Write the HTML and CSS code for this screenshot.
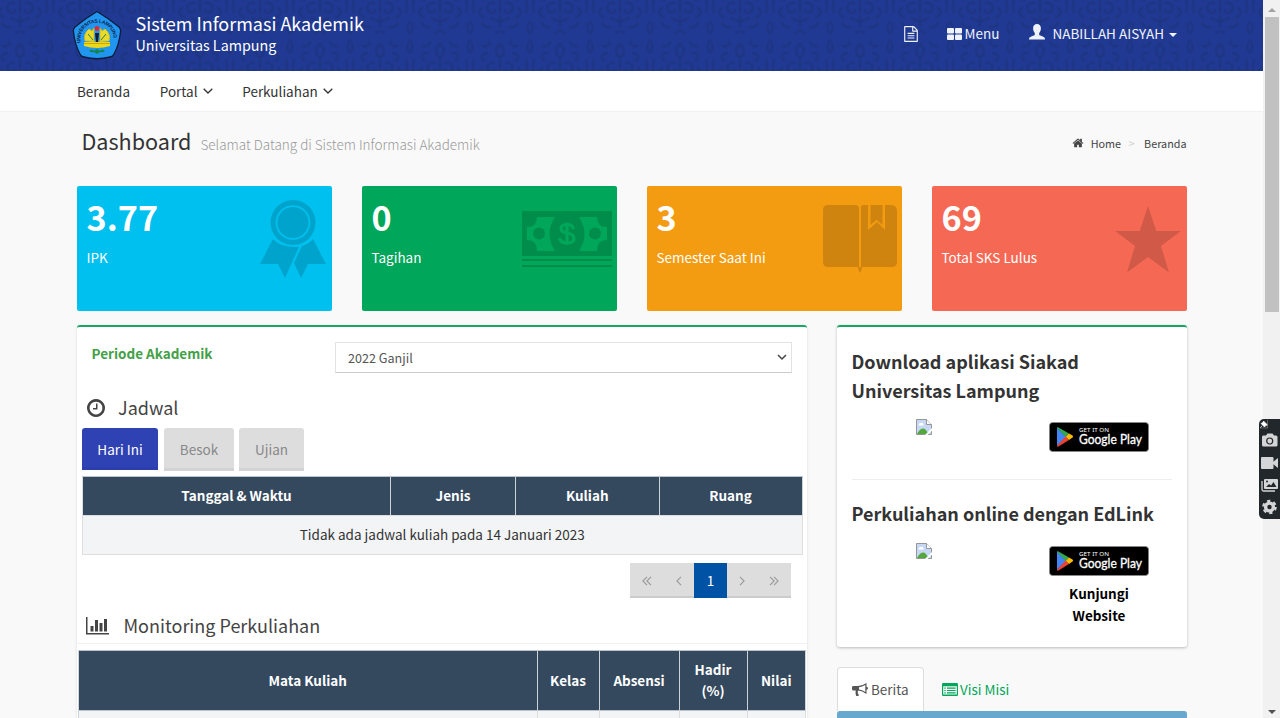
FILE: index.html
```html
<!DOCTYPE html>
<html lang="id">
<head>
<meta charset="utf-8">
<title>Sistem Informasi Akademik</title>
<link rel="stylesheet" href="styles.css">
</head>
<body>
<div class="page">
  <header class="topbar">
    <svg class="damask" width="1263" height="71" aria-hidden="true">
      <defs>
        <pattern id="damask" x="-10" y="-24" width="60" height="60" patternUnits="userSpaceOnUse">
          <g fill="none" stroke="#1c3178" stroke-width="3" stroke-linecap="round" opacity=".5">
            <path d="M30 22c-6-5-4-11 0-14c4 3 6 9 0 14M30 25v12M24 27c-5-1-8 3-6 7s7 3 7 0M36 27c5-1 8 3 6 7s-7 3-7 0M22 42q8 6 16 0M30 41v9"/>
            <path d="M17 17c-5 0-7 5-3 7M43 17c5 0 7 5 3 7M12 32c-4 3-3 8 2 9M48 32c4 3 3 8-2 9M20 51q-6 1-8-4M40 51q6 1 8-4M20 6q-2 5-7 4M40 6q2 5 7 4"/>
            <path d="M0 5q5 6 0 12M60 5q-5 6 0 12M0 46q6 5 0 11M60 46q-6 5 0 11M4 24q-2 6 0 12M56 24q2 6 0 12M26 57q4-4 8 0"/>
          </g>
        </pattern>
      </defs>
      <rect width="1263" height="71" fill="url(#damask)"/>
    </svg>
    <div class="brand">
      <svg class="emblem" width="50" height="50" viewBox="0 0 50 50">
        <defs><path id="arc" d="M8.500 33C5 6 45 6 41.500 33"/></defs>
        <path d="M25 1.500Q36 8 47 17Q49 19 48.500 22Q47 35 42 44Q41 46.500 38 47Q25 50.500 12 47Q9 46.500 8 44Q3 35 1.500 22Q1 19 3 17Q14 8 25 1.500Z" fill="#2196f0" stroke="#0c1c3c" stroke-width="1.300"/>
        <text class="emblem-text"><textPath href="#arc" textLength="55">UNIVERSITAS LAMPUNG</textPath></text>
        <path d="M12 32h26v4q-13 4-26 0Z" fill="#f0d818"/>
        <path d="M13 31Q11 24 17 19l3 2 2-3v14M37 31Q39 24 33 19l-3 2-2-3v14M14 31h22" fill="#eadb2a" stroke="#d2b91a" stroke-width=".8"/>
        <path d="M16 24l5 6M34 24l-5 6" stroke="#277c58"/>
        <path d="M12 33.500h26" stroke="#c9a714"/>
        <path d="M23 23h4l-1 9h-2Z" fill="#111b3d"/><circle cx="25" cy="18.500" r="2.400" fill="#e0283c"/>
        <path d="M17 41q3-3 5 0l3-2 3 2q2-3 5 0-3 2-5 1l-3 2-3-2q-2 1-5-1Z" fill="#128645"/>
      </svg>
      <div class="brand-text"><span class="brand-name">Sistem Informasi Akademik</span><span class="brand-sub">Universitas Lampung</span></div>
    </div>
    <nav class="tools">
      <svg class="tool-file" width="16" height="16" viewBox="0 0 1792 1792"><path d="M1596 380q28 28 48 76t20 88v1152q0 40-28 68t-68 28h-1344q-40 0-68-28t-28-68v-1600q0-40 28-68t68-28h896q40 0 88 20t76 48zm-444-244v376h376q-10-29-22-41l-313-313q-12-12-41-22zm384 1528v-1024h-416q-40 0-68-28t-28-68v-416h-768v1536h1280zm-1024-864q0-14 9-23t23-9h704q14 0 23 9t9 23v64q0 14-9 23t-23 9h-704q-14 0-23-9t-9-23v-64zm736 224q14 0 23 9t9 23v64q0 14-9 23t-23 9h-704q-14 0-23-9t-9-23v-64q0-14 9-23t23-9h704zm0 256q14 0 23 9t9 23v64q0 14-9 23t-23 9h-704q-14 0-23-9t-9-23v-64q0-14 9-23t23-9h704z"/></svg>
      <span class="tool-menu"><svg width="15" height="12" viewBox="0 0 15 12"><rect width="7" height="5.500" rx="1"/><rect x="8" width="7" height="5.500" rx="1"/><rect y="6.500" width="7" height="5.500" rx="1"/><rect x="8" y="6.500" width="7" height="5.500" rx="1"/></svg>Menu</span>
      <span class="tool-user"><svg width="16" height="16" viewBox="0 0 16 16"><path d="M8 0c2.500 0 3.900 1.700 3.900 4.200 0 2-.7 3.600-1.700 4.800v1.400c0 .6.500.9 1.200 1.200l2.800 1.200c1.300.5 1.800 1.200 1.800 2.700H0c0-1.500.5-2.200 1.800-2.700l2.800-1.200c.7-.3 1.200-.6 1.200-1.200V9C4.800 7.800 4.100 6.200 4.100 4.200 4.100 1.700 5.500 0 8 0Z"/></svg><span class="user-name">NABILLAH AISYAH</span><i class="caret"></i></span>
    </nav>
  </header>

  <nav class="mainnav">
    <a class="nav-item nav-a">Beranda</a>
    <a class="nav-item nav-b">Portal<svg width="10" height="6" viewBox="0 0 10 6"><path d="M.7.7 5 5 9.300.7"/></svg></a>
    <a class="nav-item">Perkuliahan<svg width="10" height="6" viewBox="0 0 10 6"><path d="M.7.7 5 5 9.300.7"/></svg></a>
  </nav>

  <div class="heading">
    <h1>Dashboard</h1><span class="welcome">Selamat Datang di Sistem Informasi Akademik</span>
    <div class="crumbs"><svg width="12" height="12" viewBox="0 128 1792 1536"><path d="M1472 992v480q0 26-19 45t-45 19h-384v-384h-256v384h-384q-26 0-45-19t-19-45v-480q0-1 .5-3t.5-3l575-474 575 474q1 2 1 6zm223-69l-62 74q-8 9-21 11h-3q-13 0-21-7l-692-577-692 577q-12 8-24 7-13-2-21-11l-62-74q-8-10-7-23.500t11-21.500l719-599q32-26 76-26t76 26l244 204v-195q0-14 9-23t23-9h192q14 0 23 9t9 23v408l219 182q10 8 11 21.500t-7 23.500z"/></svg><span class="crumb-home">Home</span><span class="crumb-sep">&gt;</span><span>Beranda</span></div>
  </div>

  <section class="stats">
    <div class="stat cyan"><strong>3.77</strong><span>IPK</span>
      <svg class="stat-icon" viewBox="0 0 255 125"><path fill-rule="evenodd" d="M216 14a22.500 22.500 0 1 0 .01 0ZM216 19.200a17.300 17.300 0 1 1-.01 0Z"/><circle cx="216" cy="36.500" r="15.600"/><path d="M196 53q8 9 26 8l-14 31-7-14h-18ZM236 53q-4 5-11 7l-8 17 7 15 7-14h18Z"/></svg></div>
    <div class="stat green"><strong>0</strong><span>Tagihan</span>
      <svg class="stat-icon" viewBox="0 0 255 125"><path fill-rule="evenodd" d="M160 25h90v45h-90ZM175 31q0 10-10 10v13q10 0 10 11h18q-11-17 0-34ZM217 31q11 17 0 34h18q0-11 10-11v-13q-10 0-10-10Z"/><circle cx="177" cy="47.500" r="6"/><circle cx="233" cy="47.500" r="6"/><path d="M160 73h90v2h-90ZM160 79h90v2h-90Z"/><path class="dollar" d="M211.500 43q-1-4.500-6.500-4.500-6 0-6 4 0 3.500 6 4.500 7 1 7 5.500t-7 4.500q-6.500 0-7.500-5M205 36.500v22.500"/></svg></div>
    <div class="stat orange"><strong>3</strong><span>Semester Saat Ini</span>
      <svg class="stat-icon" viewBox="0 0 255 125"><path d="M181 19h27q4 0 4 4v58h-31q-5 0-5-5V24q0-5 5-5ZM214 81V21q0-2 3-2h4v25l9-8 8 8V19h6q6 0 6 6v51q0 5-5 5h-30q0 3-2 6-2-3-2-6Z"/><path d="M223.500 19h12v20l-6-5-6 5Z"/></svg></div>
    <div class="stat red"><strong>69</strong><span>Total SKS Lulus</span>
      <svg class="stat-icon" viewBox="0 0 255 125"><path d="M216 20l8.300 25H249l-20 15 8 26.500-21-15.500-21 15.500 8-26.500-20-15h24.700Z"/></svg></div>
  </section>

  <main class="columns">
    <section class="panel">
      <div class="period"><label>Periode Akademik</label><div class="select"><span>2022 Ganjil</span><svg width="10" height="7" viewBox="0 0 10 7"><path d="M1 1l4 4 4-4"/></svg></div></div>
      <h2 class="title title-jadwal"><svg width="18" height="18" viewBox="128 128 1536 1536"><path d="M1024 544v448q0 14-9 23t-23 9h-320q-14 0-23-9t-9-23v-64q0-14 9-23t23-9h224v-352q0-14 9-23t23-9h64q14 0 23 9t9 23zm416 352q0-148-73-273t-198-198-273-73-273 73-198 198-73 273 73 273 198 198 273 73 273-73 198-198 73-273zm224 0q0 209-103 385.500t-279.500 279.500-385.500 103-385.500-103-279.500-279.500-103-385.500 103-385.500 279.500-279.500 385.500-103 385.500 103 279.500 279.500 103 385.500z"/></svg><span>Jadwal</span></h2>
      <div class="tabs"><span class="tab tab-on">Hari Ini</span><span class="tab tab-b">Besok</span><span class="tab tab-c">Ujian</span></div>
      <div class="schedule">
        <div class="th">Tanggal &amp; Waktu</div><div class="th">Jenis</div><div class="th">Kuliah</div><div class="th">Ruang</div>
        <div class="empty">Tidak ada jadwal kuliah pada 14 Januari 2023</div>
      </div>
      <div class="pager">
        <span class="pg"><svg width="10" height="10" viewBox="0 0 10 10"><path d="M5 .8.900 5 5 9.200M9 .8 4.900 5 9 9.200"/></svg></span><span class="pg pg-n"><svg width="6" height="10" viewBox="0 0 6 10"><path d="M5 .8.900 5 5 9.200"/></svg></span><span class="pg pg-on">1</span><span class="pg pg-n"><svg width="6" height="10" viewBox="0 0 6 10"><path d="M1 .8 5.100 5 1 9.200"/></svg></span><span class="pg"><svg width="10" height="10" viewBox="0 0 10 10"><path d="M1 .8 5.100 5 1 9.200M5 .8 9.100 5 5 9.200"/></svg></span>
      </div>
      <h2 class="title title-monitor"><svg width="24" height="19" viewBox="0 0 24 19"><path d="M0 1h1.500v16H23v1.500H0ZM4.500 10h3v5.500h-3ZM9 4h3v11.500H9ZM13.500 7h3v8.500h-3ZM18 3h3v12.500h-3Z"/></svg><span>Monitoring Perkuliahan</span></h2>
      <div class="monitor">
        <div class="th">Mata Kuliah</div><div class="th">Kelas</div><div class="th">Absensi</div><div class="th">Hadir<br>(%)</div><div class="th">Nilai</div>
        <div class="td"></div><div class="td"></div><div class="td"></div><div class="td"></div><div class="td"></div>
      </div>
    </section>

    <aside class="side">
      <div class="card">
        <h3>Download aplikasi Siakad Universitas Lampung</h3>
        <div class="apps">
          <svg class="broken" width="16" height="16" viewBox="0 0 16 16"><path d="M.5.500h10l5 5v10H.5Z" fill="#c6d8f5" stroke="#969696"/><path d="M10.500.5v5h5" fill="#fff" stroke="#969696"/><path d="M2.500 6q0-2 2-2 2-1 3 1v1.500h-5Z" fill="#fff"/><path d="M1 15q4-7 8-5l4 5Z" fill="#52a83c"/><path d="M9 16l7-7v2.500L11.500 16Z" fill="#fff"/></svg>
          <svg class="badge" width="100" height="30" viewBox="0 0 100 30"><rect x=".4" y=".4" width="99.200" height="29.200" rx="3.500" fill="#000" stroke="#8b8b8b" stroke-width=".8"/><path d="M8 5.500v18.500L17 15Z" fill="#4285f4"/><path d="M7.800 5.500Q8.500 4.800 9.500 5.500L20 11.500 16.500 15Z" fill="#34a853"/><path d="M20 11.500l3.500 2q1.300 1 0 2L20 18l-3.500-3Z" fill="#fbbc04"/><path d="M7.800 24Q8.500 25 9.500 24.500L20 18l-3.500-3.500Z" fill="#ea4335"/><text class="get" x="30" y="9.800" textLength="30" lengthAdjust="spacingAndGlyphs">GET IT ON</text><text class="play" x="30" y="22.300" textLength="63" lengthAdjust="spacingAndGlyphs">Google Play</text></svg>
        </div>
        <hr>
        <h3>Perkuliahan online dengan EdLink</h3>
        <div class="apps apps-edlink">
          <svg class="broken" width="16" height="16" viewBox="0 0 16 16"><path d="M.5.500h10l5 5v10H.5Z" fill="#c6d8f5" stroke="#969696"/><path d="M10.500.5v5h5" fill="#fff" stroke="#969696"/><path d="M2.500 6q0-2 2-2 2-1 3 1v1.500h-5Z" fill="#fff"/><path d="M1 15q4-7 8-5l4 5Z" fill="#52a83c"/><path d="M9 16l7-7v2.500L11.500 16Z" fill="#fff"/></svg>
          <svg class="badge" width="100" height="30" viewBox="0 0 100 30"><rect x=".4" y=".4" width="99.200" height="29.200" rx="3.500" fill="#000" stroke="#8b8b8b" stroke-width=".8"/><path d="M8 5.500v18.500L17 15Z" fill="#4285f4"/><path d="M7.800 5.500Q8.500 4.800 9.500 5.500L20 11.500 16.500 15Z" fill="#34a853"/><path d="M20 11.500l3.500 2q1.300 1 0 2L20 18l-3.500-3Z" fill="#fbbc04"/><path d="M7.800 24Q8.500 25 9.500 24.500L20 18l-3.500-3.500Z" fill="#ea4335"/><text class="get" x="30" y="9.800" textLength="30" lengthAdjust="spacingAndGlyphs">GET IT ON</text><text class="play" x="30" y="22.300" textLength="63" lengthAdjust="spacingAndGlyphs">Google Play</text></svg>
        </div>
        <p class="visit">Kunjungi<br>Website</p>
      </div>
      <div class="news-tabs">
        <span class="news-tab"><svg width="16" height="14" viewBox="0 0 16 14"><path fill-rule="evenodd" d="M14.500 0v3.800q1.500.2 1.500 1.500t-1.500 1.500v4.200Q10 7.800 6.500 7.600 5 8.500 6 9.700q-.8 1.200 1.200 2.300Q6.500 13.300 4 12.700 3.200 11 3.700 7.600H1.400Q0 7.600 0 6.200V4.500Q0 3.100 1.400 3.100H6Q10 3.100 14.500 0ZM13.300 2Q10 4 7 4.200v2.300Q10 6.800 13.300 9Z"/></svg>Berita</span>
        <span class="news-tab news-link"><svg width="16" height="13" viewBox="0 0 16 13"><path fill-rule="evenodd" d="M1.300 0h13.400Q16 0 16 1.300v10.400q0 1.300-1.300 1.300H1.300Q0 13 0 11.700V1.300Q0 0 1.300 0ZM1.200 3.200v8.300h13.600V3.200Z"/><path d="M2.300 4.500h1.400v1.200H2.300ZM5 4.500h8.600v1.200H5ZM2.300 6.900h1.400v1.200H2.300ZM5 6.900h8.600v1.200H5ZM2.300 9.300h1.400v1.200H2.300ZM5 9.300h8.600v1.200H5Z"/></svg>Visi Misi</span>
      </div>
      <div class="news-bar"></div>
    </aside>
  </main>
</div>

<div class="scrollbar"><i class="up"></i><div class="thumb"></div><i class="down"></i></div>

<div class="recorder">
  <svg width="21" height="100" viewBox="0 0 21 100">
    <path d="M4.500 2l4 4-1.500.3L5.500 8 2 4.500 4 3.500ZM3 7L1 9" fill="#fff" stroke="#fff" stroke-width=".7"/><path d="M8.500 1v8H1" fill="none" stroke="#888" stroke-width=".6"/>
    <g fill="#d4d5d6"><path d="M4 16.500h3l1.500-2h5l1.500 2h2q1.500 0 1.500 1.500v8q0 1.500-1.500 1.500H4.500Q3 27.500 3 26v-8q0-1.500 1-1.500Z"/><rect x="2" y="38" width="12.500" height="12" rx="1"/><path d="M14 43l5-4v10l-5-4Z"/><path d="M6 60h12q1 0 1 1v8q0 1-1 1H6q-1 0-1-1v-8q0-1 1-1Z"/></g>
    <circle cx="10.700" cy="22" r="3" fill="none" stroke="#22272b" stroke-width="1.200"/>
    <path d="M3 62v8.500q0 1.500 1.500 1.500H16" fill="none" stroke="#d4d5d6" stroke-width="1.300"/><path d="M7 68l3-3 2 1.500 2.500-3.500 3 5Z" fill="#22272b"/><circle cx="8" cy="62.500" r="1" fill="#22272b"/>
    <circle cx="10.500" cy="88" r="3.900" fill="none" stroke="#d4d5d6" stroke-width="3.400"/><circle cx="10.500" cy="88" r="6.200" fill="none" stroke="#d4d5d6" stroke-width="2.200" stroke-dasharray="3.250 3.250"/>
  </svg>
</div>
</body>
</html>
```
FILE: styles.css
```css
* { box-sizing: border-box; }
body {
  margin: 0;
  width: 1280px;
  height: 718px;
  overflow: hidden;
  display: flex;
  position: relative;
  background: #f9f9f9;
  color: #333;
  font-family: "Noto Sans CJK SC", "Noto Sans", sans-serif;
  font-size: 13.5px;
  line-height: 21px;
}
h1, h2, h3, p { margin: 0; font-weight: 400; }
svg { flex: none; display: block; }
.page { width: 1263px; height: 718px; overflow: hidden; flex: none; }

/* Header */
.topbar { height: 71px; background: #203a93; color: #fff; position: relative; display: flex; padding: 0 86.5px 0 72px; }
.damask { position: absolute; left: 0; top: 0; }
.brand { display: flex; position: relative; padding-top: 10px; }
.emblem-text { font: 700 4.9px "Liberation Sans", sans-serif; fill: #0b1d48; }
.brand-text { display: flex; flex-direction: column; margin-left: 13.5px; }
.brand-name { font-size: 18px; line-height: 26px; }
.brand-sub { font-size: 14.3px; line-height: 17px; }
.tools { display: flex; position: relative; margin-left: auto; height: 67px; align-items: center; color: #f0f2fa; fill: #f0f2fa; }
.tool-menu { display: flex; align-items: center; gap: 2.5px; margin-left: 28px; }
.tool-user { display: flex; align-items: center; margin-left: 29.5px; }
.tool-user svg { margin-top: -4px; }
.user-name { margin-left: 7.5px; }
.caret { border: 4px solid transparent; border-top-color: #f0f2fa; border-bottom: 0; margin-left: 4.5px; margin-top: 2px; }

.mainnav { height: 41px; background: #fff; border-bottom: 1px solid #f1f1f1; display: flex; align-items: center; padding: 1px 0 0 77px; }
.nav-item { display: flex; align-items: center; }
.nav-item svg { margin: -1px 0 0 5px; fill: none; stroke: #333; stroke-width: 1.3; }
.nav-a, .nav-b { margin-right: 29.7px; }

/* Page heading */
.heading { height: 74px; padding: 17px 76.5px 0 81.5px; display: flex; }
h1 { font-size: 21.6px; line-height: 24px; }
.welcome { font-size: 13.5px; font-weight: 300; color: #999; margin: 5px 0 0 9px; }
.crumbs { margin-left: auto; height: 28px; display: flex; align-items: center; font-size: 10.8px; color: #444; fill: #444; }
.crumb-home { margin-left: 7px; }
.crumb-sep { color: #ccc; margin: 0 9.5px 0 7.5px; }

/* Summary boxes */
.stats { display: grid; grid-template-columns: repeat(4, 255px); gap: 30px; padding-left: 76.5px; }
.stat { position: relative; height: 125px; border-radius: 2px; padding: 9px 10px; color: #fff; display: flex; flex-direction: column; }
.stat strong { font-size: 34.2px; line-height: 42px; }
.stat span { margin-top: 10px; }
.stat-icon { position: absolute; left: 0; top: 0; width: 255px; height: 125px; fill: rgba(0, 0, 0, .15); }
.cyan { background: #00c0ef; }
.green { background: #00a65a; }
.orange { background: #f39c12; }
.red { background: #f56954; }
.stat-icon .dollar { fill: none; stroke: rgba(0, 0, 0, 0); }
.green .dollar { stroke: #00a65a; stroke-width: 3.2; }

.columns { display: flex; gap: 30px; padding: 14px 0 0 76.5px; align-items: flex-start; }
.panel { width: 730px; height: 400px; background: #fff; border-top: 2px solid #16a765; border-radius: 3px; box-shadow: 0 1px 3px rgba(0, 0, 0, .12); }
.period { display: flex; justify-content: space-between; padding: 16px 15px 0; height: 63px; }
.period label { color: #43a047; font-weight: 700; }
.select { width: 457px; height: 31px; margin-top: -1px; border: 1px solid #e3e3e3; border-bottom-color: #ccc; display: flex; align-items: center; justify-content: space-between; padding: 0 4px 0 12.5px; font-size: 12.6px; color: #555; }
.select svg { fill: none; stroke: #444; stroke-width: 1.5; }
.title { display: flex; align-items: center; color: #444; fill: #444; font-size: 18px; }
.title-jadwal { height: 36px; padding: 0 0 1px 10px; }
.title-jadwal span { margin-left: 13.5px; }
.tabs { display: flex; gap: 5px; padding: 2px 0 0 5.5px; height: 50px; }
.tab { height: 43px; line-height: 43px; text-align: center; border-radius: 3px 3px 0 0; background: #ddd; color: #888; border-bottom: 3px solid #d3d3d3; width: 70px; }
.tab-on { width: 76px; height: 42px; background: #2f42b3; border-bottom-color: #2b3eae; color: #fff; margin-right: 1px; }
.tab-c { width: 65px; }
.th { background: #34495e; color: #fff; font-weight: 700; display: flex; align-items: center; justify-content: center; text-align: center; border-right: 1px solid #ccd2d8; padding-bottom: 1px; }
.schedule { margin-left: 5.5px; width: 720.5px; display: grid; grid-template-columns: 308px 125px 143.5px 143px; grid-template-rows: 38px 40px; border-left: 1px solid #ddd; border-top: 1px solid #bbc4cb; }
.empty { grid-column: 1 / -1; background: #f2f4f5; border: 1px solid #ddd; border-left: 0; text-align: center; line-height: 37px; }
.pager { display: flex; width: 161px; height: 35px; margin: 8px 0 0 553.5px; }
.pg { width: 35px; background: #ddd; border-bottom: 2px solid #ccc; display: flex; align-items: center; justify-content: center; }
.pg-n { width: 29px; }
.pg-on { width: 34px; background: #0052a4; border: 0; color: #fff; }
.pg svg { fill: none; stroke: #999; stroke-width: 1.1; margin-top: 2px; }
.title-monitor { height: 46px; padding: 10px 0 1px 9.5px; border-bottom: 1px solid #f1f1f4; }
.title-monitor span { margin-left: 13.5px; }
.monitor { margin: 6px 0 0 1.5px; width: 728px; display: grid; grid-template-columns: 458.5px 62px 80px 68px 58.5px; grid-template-rows: 59px 20px; border-left: 1px solid #ccd2d8; border-top: 1px solid #bbc4cb; }
.td { background: #f2f4f5; border-right: 1px solid #ddd; border-top: 1px solid #bbc4cb; }

/* Sidebar */
.side { width: 350px; }
.card { height: 322px; background: #fff; border-top: 2px solid #16a765; border-radius: 3px; box-shadow: 0 1px 3px rgba(0, 0, 0, .25); padding: 20px 15px 0; }
h3 { font-size: 18px; line-height: 29px; font-weight: 700; }
.apps { display: flex; height: 45px; padding: 15px 22.5px 0 64px; justify-content: space-between; }
.apps-edlink { margin-top: 1px; }
.broken { margin-top: -1px; }
.badge { margin-top: 2px; }
.get { font: 400 6px "Noto Sans", sans-serif; fill: #fff; }
.play { font: 400 13px "Lato", sans-serif; fill: #fff; stroke: #fff; stroke-width: .3; }
hr { border: 0; border-top: 1px solid #eee; margin: 29px 0 19px; }
.visit { width: 100px; margin: 9px 0 0 197.5px; text-align: center; color: #000; font-weight: 700; line-height: 21.5px; }
.news-tabs { display: flex; margin-top: 20px; height: 44px; }
.news-tab { width: 87.5px; height: 44px; border: 1px solid #ddd; border-bottom: 0; border-radius: 4px 4px 0 0; background: #fff; display: flex; align-items: center; gap: 3px; padding-left: 14.5px; color: #555; fill: #555; }
.news-link { background: none; border-color: transparent; color: #00a65a; fill: #00a65a; padding-left: 17px; width: 100px; gap: 2px; }
.news-bar { height: 20px; background: #67a8ce; border-radius: 3px 3px 0 0; }

/* Window scrollbar and capture toolbar */
.scrollbar { width: 17px; height: 718px; background: #f1f1f1; display: flex; flex-direction: column; align-items: center; padding: 8px 0 4px; }
.scrollbar i { border: 4px solid transparent; }
.scrollbar .up { border-top: 0; border-bottom-color: #a3a3a3; }
.scrollbar .down { border-bottom: 0; border-top-color: #505050; margin-top: auto; }
.thumb { width: 14px; height: 295px; margin-top: 5px; background: #c1c1c1; }
.recorder { position: absolute; left: 1259px; top: 419px; width: 21px; height: 100px; border-radius: 5px 0 0 5px; background: #22272b; }
```
